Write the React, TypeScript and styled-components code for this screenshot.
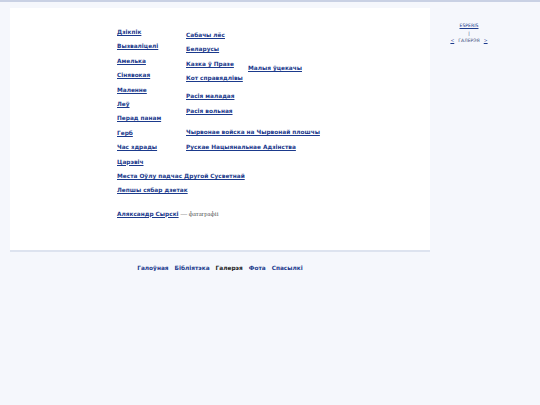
import React from 'react'
import styled, { createGlobalStyle } from 'styled-components'

// Page defaults.
const GlobalStyle = createGlobalStyle`
    html, body {
        margin: 0;
        padding: 0;
        background-color: #f5f7fc;
    }
    body {
        border-top: 2px solid #c9d1e4;
        font-family: "DejaVu Sans", Verdana, sans-serif;
    }
`

const Page = styled.div`
    display: flex;
    align-items: flex-start;
    width: 540px;
`

const MainColumn = styled.div`
    width: 420px;
    margin-left: 10px;
    margin-top: 6px;
`

const Panel = styled.div`
    height: 244px;
    box-sizing: border-box;
    background-color: #ffffff;
    border-bottom: 2px solid #dde3ef;
    padding: 17px 0 0 107px;
`

const Columns = styled.div`
    display: flex;
    align-items: flex-start;
`

const Column = styled.div<{ $width: number; $top?: number }>`
    display: flex;
    flex-direction: column;
    width: ${(p) => p.$width}px;
    margin-top: ${(p) => p.$top ?? 0}px;
`

const Item = styled.a<{ $space?: number }>`
    display: block;
    height: 14.4px;
    line-height: 14.4px;
    margin-top: ${(p) => p.$space ?? 0}px;
    white-space: nowrap;
    font-size: 5.8px;
    font-weight: bold;
    color: #1b3a8c;
    text-decoration: underline;
`

const Credit = styled.div`
    margin-top: 9px;
    line-height: 14px;
    font-size: 5.8px;
    white-space: nowrap;
`

const CreditLink = styled.a`
    font-weight: bold;
    color: #1b3a8c;
    text-decoration: underline;
`

const CreditText = styled.span`
    font-family: "Liberation Serif", "Times New Roman", serif;
    font-size: 6.6px;
    color: #555555;
`

const BottomNav = styled.div`
    display: flex;
    justify-content: center;
    gap: 6px;
    margin-top: 13px;
    font-size: 5.8px;
    font-weight: bold;
`

const NavLink = styled.a<{ $current?: boolean }>`
    color: ${(p) => (p.$current ? '#222222' : '#1b3a8c')};
    text-decoration: ${(p) => (p.$current ? 'none' : 'underline')};
`

const Sidebar = styled.div`
    width: 78px;
    margin-top: 20px;
    display: flex;
    flex-direction: column;
    align-items: center;
    font-size: 4.6px;
    line-height: 7.5px;
    color: #3a4a7a;
`

const SideLink = styled.a`
    color: #1b3a8c;
    text-decoration: underline;
`

const SideRow = styled.div`
    display: flex;
    gap: 4px;
    white-space: nowrap;
`

const first = [
    'Дзікпік',
    'Вызваліцелі',
    'Амелька',
    'Сінявокая',
    'Маленне',
    'Леў',
    'Перад панам',
    'Герб',
    'Час здрады',
    'Царэвіч',
    'Места Оўлу падчас Другой Сусветнай',
    'Лепшы сябар дзетак',
]

const second: { title: string; space?: number }[] = [
    { title: 'Сабачы лёс' },
    { title: 'Беларусы' },
    { title: 'Казка ў Празе' },
    { title: 'Кот справядлівы' },
    { title: 'Расія маладая', space: 3.6 },
    { title: 'Расія вольная' },
    { title: 'Чырвонае войска на Чырвонай плошчы', space: 7.5 },
    { title: 'Рускае Нацыянальнае Адзінства' },
]

export default function App(): JSX.Element {
    return (
        <Page>
            <GlobalStyle />
            <MainColumn>
                <Panel>
                    <Columns>
                        <Column $width={69}>
                            {first.map((t) => (
                                <Item key={t} href="#">
                                    {t}
                                </Item>
                            ))}
                        </Column>
                        <Column $width={62} $top={3}>
                            {second.map((s) => (
                                <Item key={s.title} href="#" $space={s.space}>
                                    {s.title}
                                </Item>
                            ))}
                        </Column>
                        <Column $width={80} $top={36}>
                            <Item href="#">Малыя ўцекачы</Item>
                        </Column>
                    </Columns>
                    <Credit>
                        <CreditLink href="#">Аляксандр Сырскі</CreditLink>{' '}
                        <CreditText>— фатаграфіі</CreditText>
                    </Credit>
                </Panel>
                <BottomNav>
                    <NavLink href="#">Галоўная</NavLink>
                    <NavLink href="#">Бібліятэка</NavLink>
                    <NavLink $current>Галерэя</NavLink>
                    <NavLink href="#">Фота</NavLink>
                    <NavLink href="#">Спасылкі</NavLink>
                </BottomNav>
            </MainColumn>
            <Sidebar>
                <SideLink href="#">ESPERIS</SideLink>
                <div>|</div>
                <SideRow>
                    <SideLink href="#">&lt;</SideLink>
                    <span>ГАЛЕРЭЯ</span>
                    <SideLink href="#">&gt;</SideLink>
                </SideRow>
            </Sidebar>
        </Page>
    )
}
